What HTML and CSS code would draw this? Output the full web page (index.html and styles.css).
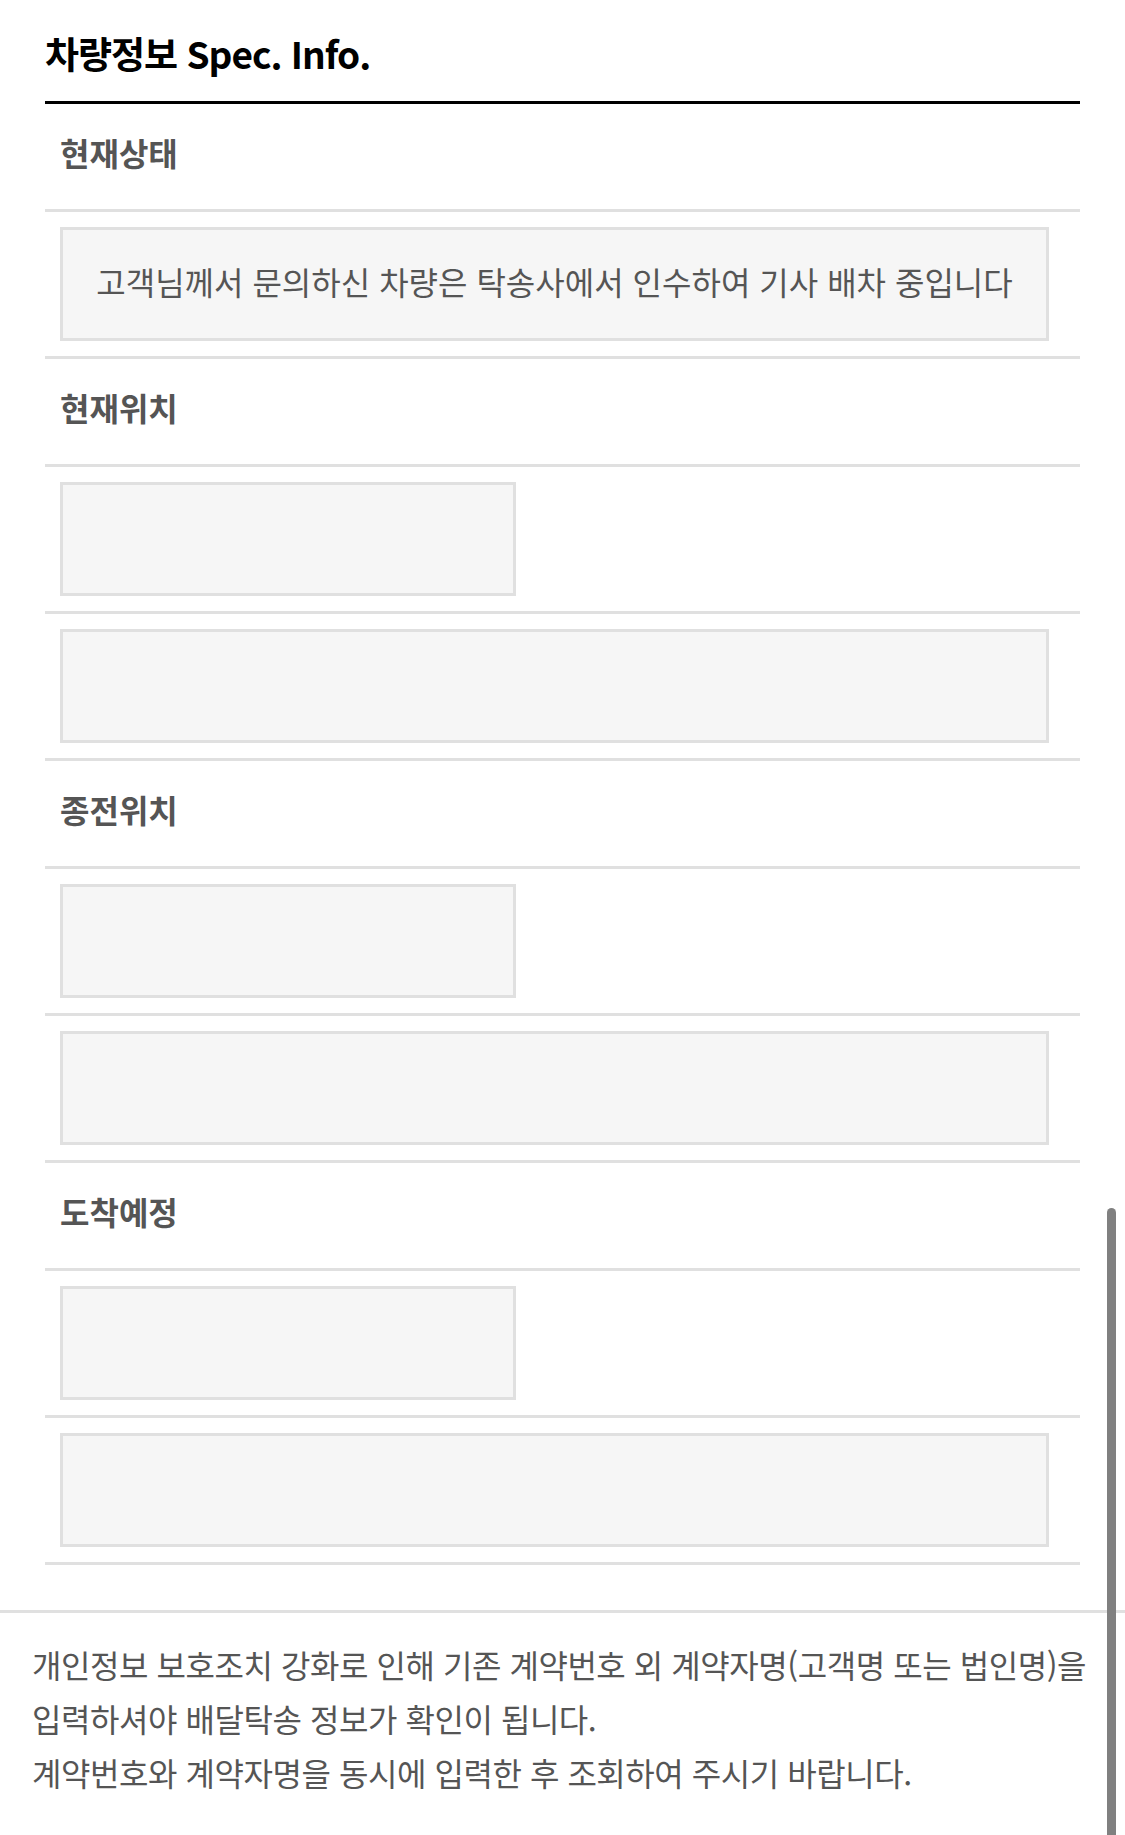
FILE: index.html
```html
<!DOCTYPE html>
<html lang="ko">
<head>
<meta charset="utf-8">
<title>차량정보</title>
<link rel="stylesheet" href="styles.css">
</head>
<body>
<div class="page">
  <section class="spec">
    <h2 class="spec-title">차량정보 Spec. Info.</h2>
    <div class="spec-table">
      <div class="row row-head"><span class="row-label">현재상태</span></div>
      <div class="row row-box"><div class="box box-wide box-text">고객님께서 문의하신 차량은 탁송사에서 인수하여 기사 배차 중입니다</div></div>

      <div class="row row-head"><span class="row-label">현재위치</span></div>
      <div class="row row-box"><div class="box box-half"></div></div>
      <div class="row row-box"><div class="box box-wide"></div></div>

      <div class="row row-head"><span class="row-label">종전위치</span></div>
      <div class="row row-box"><div class="box box-half"></div></div>
      <div class="row row-box"><div class="box box-wide"></div></div>

      <div class="row row-head"><span class="row-label">도착예정</span></div>
      <div class="row row-box"><div class="box box-half"></div></div>
      <div class="row row-box"><div class="box box-wide"></div></div>
    </div>
  </section>
  <footer class="notice">
    <p>개인정보 보호조치 강화로 인해 기존 계약번호 외 계약자명(고객명 또는 법인명)을 입력하셔야 배달탁송 정보가 확인이 됩니다.</p>
    <p>계약번호와 계약자명을 동시에 입력한 후 조회하여 주시기 바랍니다.</p>
  </footer>
</div>
<div class="scrollbar"></div>
</body>
</html>
```

FILE: styles.css
```css
html, body {
  margin: 0;
  padding: 0;
  background: #fff;
}

body {
  font-family: "Noto Sans CJK KR", "Noto Sans", sans-serif;
  color: #555;
  width: 1125px;
  min-height: 1835px;
  overflow: hidden;
}

.page {
  display: flex;
  flex-direction: column;
}

.spec {
  padding: 0 45px;
}

.spec-title {
  margin: 0;
  padding-top: 28px;
  height: 101px;
  box-sizing: border-box;
  font-size: 37px;
  line-height: 50px;
  font-weight: 700;
  color: #000;
  letter-spacing: -1px;
}

.spec-table {
  border-top: 3px solid #000;
}

.row {
  display: flex;
  align-items: center;
  border-bottom: 3px solid #e0e0e0;
  padding: 0 31px 0 15px;
}

.row-head {
  padding-bottom: 9px;
  height: 96px;
}

.row-label {
  font-size: 32px;
  font-weight: 700;
  color: #555;
  line-height: 40px;
}

.row-box {
  padding-top: 15px;
  padding-bottom: 15px;
}

.box {
  box-sizing: border-box;
  height: 114px;
  background: #f6f6f6;
  border: 3px solid #e0e0e0;
}

.box-half {
  width: 456px;
}

.box-wide {
  width: 989px;
}

.box-text {
  display: flex;
  align-items: center;
  justify-content: center;
  font-size: 32px;
  line-height: 40px;
  color: #555;
  padding-bottom: 7px;
}

.notice {
  margin-top: 45px;
  border-top: 3px solid #e0e0e0;
  padding: 24px 20px 40px 32px;
}

.notice p {
  margin: 0;
  font-size: 32px;
  line-height: 54px;
  color: #555;
  letter-spacing: -0.45px;
}

.scrollbar {
  position: fixed;
  top: 1208px;
  right: 9px;
  bottom: 0;
  width: 9px;
  background: #808080;
  border-radius: 5px 5px 0 0;
}
```
